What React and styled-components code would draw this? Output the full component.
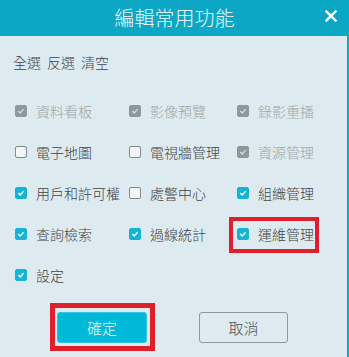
import React from "react";
import styled, { createGlobalStyle } from "styled-components";

const Global = createGlobalStyle`
  html, body { margin: 0; padding: 0; }
  body {
    font-family: "Noto Sans CJK TC", "Noto Sans CJK SC", "Noto Sans", sans-serif;
    background: #ddeaef;
  }
`;

const Dialog = styled.div`
  width: 349px;
  height: 357px;
  box-sizing: border-box;
  background: #ddeaef;
  border-right: 2px solid #10a8c6;
  display: flex;
  flex-direction: column;
  overflow: hidden;
`;

const Header = styled.div`
  height: 36px;
  background: #0da7c6;
  display: flex;
  align-items: center;
  justify-content: center;
  position: relative;
  flex-shrink: 0;
`;

const Title = styled.div`
  color: #e9f7fa;
  font-size: 20px;
  font-weight: 300;
  line-height: 36px;
  padding-left: 2px;
`;

const Close = styled.button`
  position: absolute;
  right: 9px;
  top: 9px;
  width: 14px;
  height: 14px;
  padding: 0;
  border: none;
  background: transparent;
  display: flex;
  align-items: center;
  justify-content: center;
  cursor: pointer;
`;

const Toolbar = styled.div`
  margin-top: 16px;
  padding-left: 13px;
  display: flex;
  gap: 6px;
  height: 20px;
  align-items: center;
`;

const LinkText = styled.span`
  font-size: 14px;
  font-weight: 300;
  color: #3c4346;
  line-height: 20px;
  cursor: pointer;
`;

const Grid = styled.div`
  display: grid;
  grid-template-columns: 114px 108px 1fr;
  grid-auto-rows: 41px;
  padding-left: 15px;
  margin-top: 18px;
`;

const Item = styled.label`
  display: flex;
  align-items: center;
  gap: 9px;
  position: relative;
  white-space: nowrap;
  font-size: 14px;
  font-weight: 300;
  color: ${(p) => (p.$disabled ? "#9ea7aa" : "#3f4446")};
`;

const Box = styled.span`
  width: 12px;
  height: 12px;
  box-sizing: border-box;
  border-radius: 2px;
  flex-shrink: 0;
  display: flex;
  align-items: center;
  justify-content: center;
  background: ${(p) =>
    p.$checked ? (p.$disabled ? "#8e979a" : "#17b3d4") : "#f2f6f7"};
  border: 1px solid
    ${(p) => (p.$checked ? (p.$disabled ? "#8e979a" : "#17b3d4") : "#7f898c")};
`;

const Mark = styled.span`
  position: absolute;
  left: -8px;
  top: 4px;
  width: 90px;
  height: 36px;
  box-sizing: border-box;
  border: 4px solid #e01f2b;
  pointer-events: none;
`;

const Buttons = styled.div`
  display: flex;
  justify-content: center;
  gap: 52px;
  margin-top: 17px;
  padding-right: 2px;
`;

const Btn = styled.button`
  width: ${(p) => (p.$primary ? "90px" : "89px")};
  height: 31px;
  border-radius: 3px;
  font-family: inherit;
  font-size: 15px;
  font-weight: 300;
  position: relative;
  cursor: pointer;
  background: ${(p) => (p.$primary ? "#00b9d9" : "transparent")};
  color: ${(p) => (p.$primary ? "#e6f7fb" : "#4a4f51")};
  border: 1px solid ${(p) => (p.$primary ? "#33c4e0" : "#8c989c")};
  padding: 0;
`;

const BtnMark = styled.span`
  position: absolute;
  left: -8px;
  right: -9px;
  top: -10px;
  bottom: -9px;
  border: 5px solid #e01f2b;
  pointer-events: none;
`;

const Check = ({ disabled }) => (
  <svg width="8" height="8" viewBox="0 0 8 8">
    <path
      d="M1.3 4.1 L3.2 5.9 L6.7 2.1"
      fill="none"
      stroke={disabled ? "#d6dcde" : "#ffffff"}
      strokeWidth="1.4"
    />
  </svg>
);

const items = [
  { t: "資料看板", c: true, d: true },
  { t: "影像預覽", c: true, d: true },
  { t: "錄影重播", c: true, d: true },
  { t: "電子地圖", c: false },
  { t: "電視牆管理", c: false },
  { t: "資源管理", c: true, d: true },
  { t: "用戶和許可權", c: true },
  { t: "處警中心", c: false },
  { t: "組織管理", c: true },
  { t: "查詢檢索", c: true },
  { t: "過線統計", c: true },
  { t: "運維管理", c: true, mark: true },
  { t: "設定", c: true },
];

export default function App() {
  return (
    <>
      <Global />
      <Dialog>
        <Header>
          <Title>編輯常用功能</Title>
          <Close aria-label="close">
            <svg width="12" height="12" viewBox="0 0 12 12">
              <path
                d="M1.5 1.5 L10.5 10.5 M10.5 1.5 L1.5 10.5"
                stroke="#ffffff"
                strokeWidth="2.4"
                strokeLinecap="square"
              />
            </svg>
          </Close>
        </Header>
        <Toolbar>
          <LinkText>全選</LinkText>
          <LinkText>反選</LinkText>
          <LinkText>清空</LinkText>
        </Toolbar>
        <Grid>
          {items.map((it) => (
            <Item key={it.t} $disabled={it.d}>
              <Box $checked={it.c} $disabled={it.d}>
                {it.c && <Check disabled={it.d} />}
              </Box>
              {it.t}
              {it.mark && <Mark />}
            </Item>
          ))}
        </Grid>
        <Buttons>
          <Btn $primary>
            確定
            <BtnMark />
          </Btn>
          <Btn>取消</Btn>
        </Buttons>
      </Dialog>
    </>
  );
}
